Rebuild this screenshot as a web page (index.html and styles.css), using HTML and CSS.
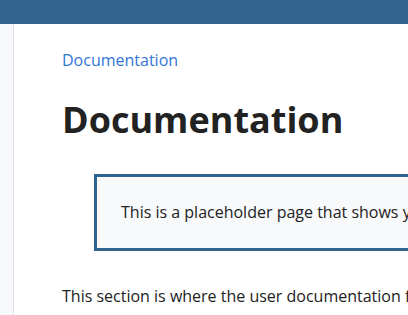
FILE: index.html
```html
<!DOCTYPE html>
<html lang="en">
<head>
    <meta charset="UTF-8">
    <meta name="viewport" content="width=device-width, initial-scale=1.0">
    <title>Documentation</title>
    <link rel="stylesheet" href="styles.css">
</head>
<body>
    <header class="navbar"></header>

    <div class="page">
        <aside class="sidebar"></aside>

        <main class="content">
            <nav class="breadcrumb">
                <a href="#">Documentation</a>
            </nav>

            <h1>Documentation</h1>

            <div class="callout">
                <p>This is a placeholder page that shows you how to use this template site.</p>
            </div>

            <p class="lead">This section is where the user documentation for your project lives - all the information your users need to understand and successfully use your project.</p>
        </main>
    </div>
</body>
</html>
```

FILE: styles.css
```css
:root {
    --azul: #30638e;
    --link: #3176d9;
    --texto: #222222;
    --cinza-claro: #f8f9fa;
    --borda: #dee2e6;
}

* {
    margin: 0;
    padding: 0;
    box-sizing: border-box;
}

body {
    font-family: "Open Sans", sans-serif;
    font-size: 16px;
    line-height: 1.5;
    color: var(--texto);
    background-color: #ffffff;
    overflow: hidden;
}

.navbar {
    height: 24px;
    background-color: var(--azul);
}

.page {
    display: flex;
    min-height: 291px;
}

.sidebar {
    width: 14px;
    flex-shrink: 0;
    background-color: var(--cinza-claro);
    border-right: 1px solid var(--borda);
}

.content {
    flex: 1;
    min-width: 0;
    padding: 24px 0 0 48px;
    white-space: nowrap;
}

.breadcrumb a {
    color: var(--link);
    text-decoration: none;
}

h1 {
    font-size: 36px;
    font-weight: 700;
    line-height: 1.2;
    margin: 26px 0 33px;
}

.callout {
    margin: 0 0 33px 32px;
    width: 600px;
    padding: 23px 24px 24px;
    background-color: var(--cinza-claro);
    border: 3px solid var(--azul);
}
```
